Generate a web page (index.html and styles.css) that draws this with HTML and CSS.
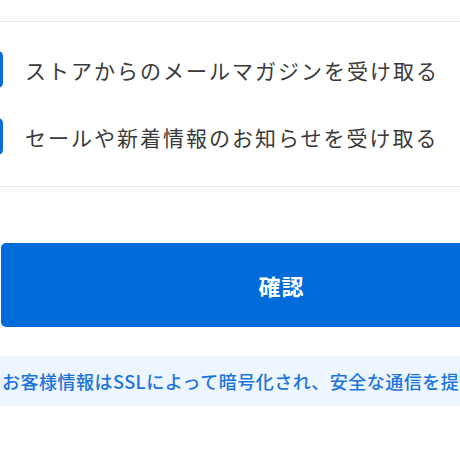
FILE: index.html
```html
<!DOCTYPE html>
<html lang="ja">
<head>
    <meta charset="UTF-8">
    <meta name="viewport" content="width=device-width, initial-scale=1.0">
    <title>確認</title>
    <link rel="stylesheet" href="styles.css">
</head>
<body>
    <div class="page">
        <div class="options">
            <label class="option">
                <span class="checkbox"></span>
                <span class="option-text">ストアからのメールマガジンを受け取る</span>
            </label>
            <label class="option">
                <span class="checkbox"></span>
                <span class="option-text">セールや新着情報のお知らせを受け取る</span>
            </label>
        </div>

        <button class="confirm-button">確認</button>

        <div class="ssl-note">お客様情報はSSLによって暗号化され、安全な通信を提供しています。</div>
    </div>
</body>
</html>
```

FILE: styles.css
```css
body {
    margin: 0;
    font-family: "Noto Sans CJK JP", "Noto Sans", sans-serif;
    background: #fff;
    overflow: hidden;
}
.page {
    padding-top: 21px;
}
.options {
    display: flex;
    flex-direction: column;
    gap: 30px;
    margin-left: -34px;
    padding: 29px 0 31px;
    border-top: 1px solid #e8e8e8;
    border-bottom: 1px solid #e8e8e8;
}
.option {
    display: flex;
    align-items: center;
    height: 37px;
}
.checkbox {
    flex: none;
    width: 37px;
    height: 37px;
    border-radius: 5px;
    background-color: #0a6cd9;
}
.option-text {
    margin-left: 22px;
    font-size: 21px;
    letter-spacing: 2px;
    color: #3a3a3a;
    white-space: nowrap;
}
.confirm-button {
    display: block;
    margin: 56px 0 0 1px;
    width: 561px;
    height: 84px;
    border: none;
    border-radius: 5px;
    background-color: #006bd9;
    color: #fff;
    font-family: inherit;
    font-size: 22px;
    font-weight: bold;
    letter-spacing: 1px;
}
.ssl-note {
    margin-top: 29px;
    height: 50px;
    line-height: 50px;
    padding-left: 2px;
    background-color: #edf5fe;
    color: #1a74dc;
    font-size: 18px;
    font-weight: 500;
    letter-spacing: 0.5px;
    white-space: nowrap;
}
```
